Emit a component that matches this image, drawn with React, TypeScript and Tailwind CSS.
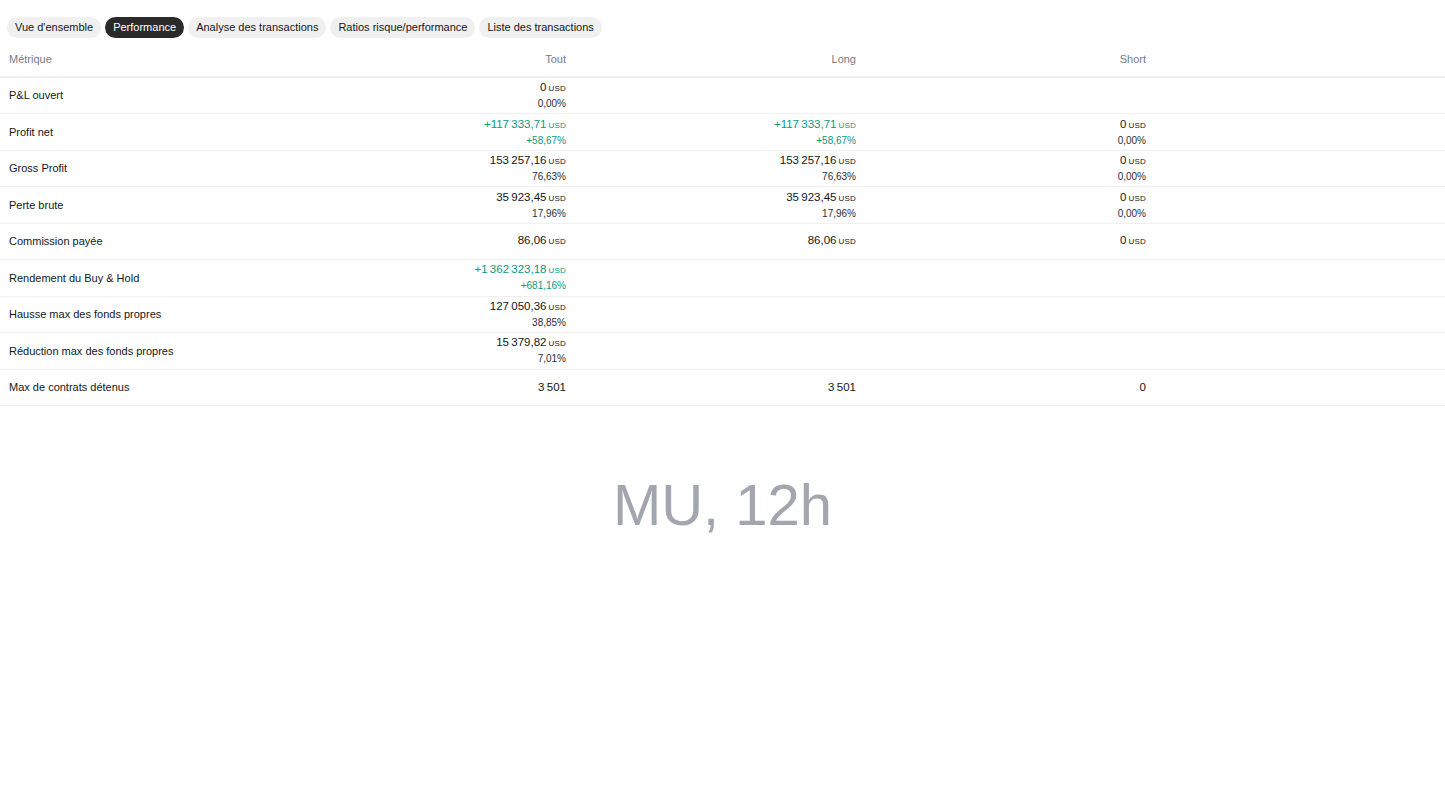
import React from "react";

type Cell = { value: string; unit?: boolean; pct?: string; green?: boolean } | null;

interface Row {
    label: string,
    cells: Cell[]
}

const tabs = ["Vue d'ensemble", "Performance", "Analyse des transactions", "Ratios risque/performance", "Liste des transactions"];

const n = (s: string) => s.replace(/ /g, "\u202F");

const rows: Row[] = [
    { label: "P&L ouvert", cells: [{ value: "0", unit: true, pct: "0,00%" }, null, null] },
    {
        label: "Profit net", cells: [
            { value: n("+117 333,71"), unit: true, pct: "+58,67%", green: true },
            { value: n("+117 333,71"), unit: true, pct: "+58,67%", green: true },
            { value: "0", unit: true, pct: "0,00%" }
        ]
    },
    {
        label: "Gross Profit", cells: [
            { value: n("153 257,16"), unit: true, pct: "76,63%" },
            { value: n("153 257,16"), unit: true, pct: "76,63%" },
            { value: "0", unit: true, pct: "0,00%" }
        ]
    },
    {
        label: "Perte brute", cells: [
            { value: n("35 923,45"), unit: true, pct: "17,96%" },
            { value: n("35 923,45"), unit: true, pct: "17,96%" },
            { value: "0", unit: true, pct: "0,00%" }
        ]
    },
    {
        label: "Commission payée", cells: [
            { value: "86,06", unit: true },
            { value: "86,06", unit: true },
            { value: "0", unit: true }
        ]
    },
    { label: "Rendement du Buy & Hold", cells: [{ value: n("+1 362 323,18"), unit: true, pct: "+681,16%", green: true }, null, null] },
    { label: "Hausse max des fonds propres", cells: [{ value: n("127 050,36"), unit: true, pct: "38,85%" }, null, null] },
    { label: "Réduction max des fonds propres", cells: [{ value: n("15 379,82"), unit: true, pct: "7,01%" }, null, null] },
    { label: "Max de contrats détenus", cells: [{ value: n("3 501") }, { value: n("3 501") }, { value: "0" }] },
];

function ValueCell({ cell }: { cell: Cell }) {
    if (!cell) return <div className="w-[290px] pr-[10px]" />;
    const color = cell.green ? "text-[#089981]" : "text-[#131722]";
    return (
        <div className={`w-[290px] pr-[10px] flex flex-col items-end justify-center ${color}`}>
            <div className="text-[11.5px] leading-[15px]">
                {cell.value}
                {cell.unit && <span className="ml-[2px] text-[8px] font-medium tracking-[0.2px]">USD</span>}
            </div>
            {cell.pct && <div className={`text-[10px] leading-[15px] ${cell.green ? "" : "text-[#2a2e39]"}`}>{cell.pct}</div>}
        </div>
    );
}

export default function App() {
    return (
        <div className="w-[1445px] h-[793px] bg-white flex flex-col" style={{ fontFamily: '"Liberation Sans", Arial, sans-serif' }}>
            <div className="flex gap-[4px] pl-[7px] pt-[17px]">
                {tabs.map((t) => (
                    <div key={t}
                        className={`h-[21px] px-[8px] rounded-full flex items-center text-[11px] ${t === "Performance" ? "bg-[#2a2a2a] text-white" : "bg-[#f0f0f0] text-[#131722]"}`}>
                        {t}
                    </div>
                ))}
            </div>
            <div className="mt-[1px]">
                <div className="flex h-[39px] pt-[3px] items-center border-b-2 border-[#f0f0f2] text-[11px] text-[#787b86]">
                    <div className="w-[286px] pl-[9px]">Métrique</div>
                    <div className="w-[290px] pr-[10px] text-right">Tout</div>
                    <div className="w-[290px] pr-[10px] text-right">Long</div>
                    <div className="w-[290px] pr-[10px] text-right">Short</div>
                </div>
                {rows.map((r) => (
                    <div key={r.label} className="flex h-[36.44px] border-b border-[#f0f0f2]">
                        <div className="w-[286px] pl-[9px] flex items-center text-[11px] text-[#131722]">{r.label}</div>
                        {r.cells.map((c, i) => <ValueCell key={i} cell={c} />)}
                    </div>
                ))}
            </div>
            <div className="flex justify-center mt-[64px]">
                <span className="text-[58px] leading-[70px] text-[#a3a6af]">MU, 12h</span>
            </div>
        </div>
    );
}
